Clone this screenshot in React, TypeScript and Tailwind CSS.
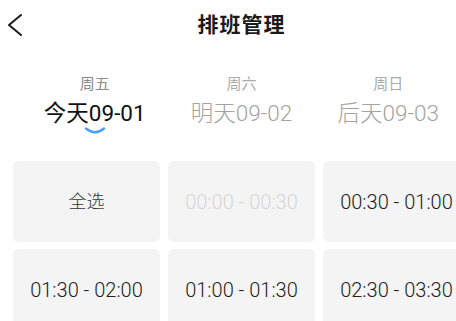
const days = [
  { week: '周五', date: '今天09-01', active: true },
  { week: '周六', date: '明天09-02', active: false },
  { week: '周日', date: '后天09-03', active: false },
];

const slots = [
  { label: '全选', kind: 'all' },
  { label: '00:00 - 00:30', kind: 'disabled' },
  { label: '00:30 - 01:00', kind: 'normal' },
  { label: '01:30 - 02:00', kind: 'normal' },
  { label: '01:00 - 01:30', kind: 'normal' },
  { label: '02:30 - 03:30', kind: 'normal' },
];

export default function App() {
  return (
    <div className="w-[456px] h-[321px] overflow-hidden bg-white font-['Liberation_Sans','Noto_Sans_CJK_SC',sans-serif]">
      <div className="w-[483px]">
        <div className="h-[50px] grid grid-cols-[60px_1fr_60px] items-center">
          <div className="pl-[7px] flex items-center">
            <svg width="16" height="24" viewBox="0 0 16 24" fill="none" stroke="#1a1a1a" strokeWidth="2" strokeLinecap="round" strokeLinejoin="round">
              <path d="M14 2 L2 12 L14 22" />
            </svg>
          </div>
          <div className="text-center text-[21px] font-semibold text-[#1a1a1a] tracking-[1px]">排班管理</div>
          <div />
        </div>

        <div className="flex justify-evenly pt-[24px]">
          {days.map((d) => (
            <div key={d.date} className="flex flex-col items-center w-[104px]">
              <div className={`text-[15px] leading-[20px] ${d.active ? 'text-[#8a8a8a]' : 'text-[#ababab]'}`}>{d.week}</div>
              <div
                className={`mt-[5px] text-[22.5px] leading-[28px] whitespace-nowrap font-['Roboto','Noto_Sans_CJK_SC',sans-serif] ${
                  d.active ? 'text-[#111]' : 'text-[#a3a3a3] font-light'
                }`}
              >
                {d.date}
              </div>
              <div className="h-[7px]">
                {d.active && (
                  <svg width="22" height="7" viewBox="0 0 22 7" fill="none" stroke="#4c9ef6" strokeWidth="2.4" strokeLinecap="round">
                    <path d="M2 1.5 Q11 9 20 1.5" />
                  </svg>
                )}
              </div>
            </div>
          ))}
        </div>

        <div className="mt-[27px] px-[13px] grid grid-cols-[147px_147px_147px] gap-x-2 gap-y-[7px]">
          {slots.map((s) => (
            <div
              key={s.label}
              className={`h-[81px] rounded-[6px] bg-[#f4f4f4] flex items-center justify-center whitespace-nowrap font-['Roboto','Noto_Sans_CJK_SC',sans-serif] font-light ${
                s.kind === 'all'
                  ? 'text-[18px] text-[#333]'
                  : s.kind === 'disabled'
                  ? 'text-[20px] text-[#d6d6d6]'
                  : 'text-[20px] text-[#222]'
              }`}
            >
              {s.label}
            </div>
          ))}
        </div>
      </div>
    </div>
  );
}
